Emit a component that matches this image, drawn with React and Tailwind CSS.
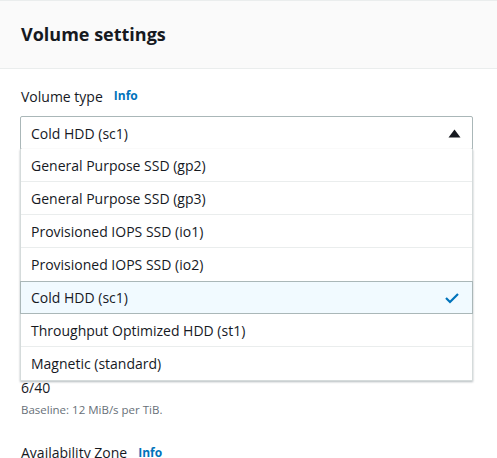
import React from 'react';

const options = [
  'General Purpose SSD (gp2)',
  'General Purpose SSD (gp3)',
  'Provisioned IOPS SSD (io1)',
  'Provisioned IOPS SSD (io2)',
  'Cold HDD (sc1)',
  'Throughput Optimized HDD (st1)',
  'Magnetic (standard)',
];

const selected = 'Cold HDD (sc1)';

const Info = () => (
  <span className="ml-[11px] text-[12px] font-bold text-[#0073bb]">Info</span>
);

const VolumeTypeSelect = () => (
  <div className="relative">
    <div className="h-[34px] flex items-center justify-between border border-[#aab7b8] rounded-[2px] bg-white pl-[10px] pr-[10px]">
      <span className="text-[14px] text-[#16191f]">{selected}</span>
      <svg width="13" height="9" viewBox="0 0 13 9" className="mr-[1px]">
        <polygon points="6.5,0.5 12.5,8.5 0.5,8.5" fill="#16191f" />
      </svg>
    </div>

    {/* open menu sits over the fields below */}
    <div className="absolute left-0 right-0 top-[33px] z-10 bg-white border-x border-b border-[#d5dbdb] shadow-[0_1px_2px_rgba(0,28,36,0.3)]">
      {options.map((opt, i) => {
        const isSel = opt === selected;
        return (
          <div
            key={opt}
            className={`h-[33px] flex items-center justify-between pl-[10px] pr-[12px] text-[14px] text-[#16191f] ${
              isSel
                ? 'bg-[#f1faff] border border-[#aab7b8] -mx-px'
                : i < options.length - 1 && options[i + 1] !== selected
                ? 'border-b border-[#eaeded]'
                : ''
            }`}
          >
            <span>{opt}</span>
            {isSel && (
              <svg width="16" height="12" viewBox="0 0 16 12">
                <polyline points="2,6 6,10 14,2" fill="none" stroke="#0073bb" strokeWidth="2.2" />
              </svg>
            )}
          </div>
        );
      })}
    </div>
  </div>
);

const App = () => {
  return (
    <div className="w-[497px] h-[458px] overflow-hidden bg-white font-['Open_Sans',sans-serif] text-[#16191f]">
      {/* Header */}
      <div className="h-[69px] bg-[#fafafa] border-t border-b border-[#eaeded] flex items-center pl-[21px]">
        <h2 className="text-[18px] font-bold">Volume settings</h2>
      </div>

      <div className="pl-[20px] pr-[24px] pt-[15px]">
        <div className="flex items-center h-[24px] mb-[8px] pl-px">
          <span className="text-[14px]">Volume type</span>
          <Info />
        </div>

        <VolumeTypeSelect />

        <div className="mt-[228px] pl-px">
          <div className="text-[14px] leading-[20px]">6/40</div>
          <div className="text-[11.5px] text-[#687078] mt-[3px]">Baseline: 12 MiB/s per TiB.</div>
          <div className="flex items-center mt-[24px]">
            <span className="text-[14px]">Availability Zone</span>
            <Info />
          </div>
        </div>
      </div>
    </div>
  );
};

export default App;
